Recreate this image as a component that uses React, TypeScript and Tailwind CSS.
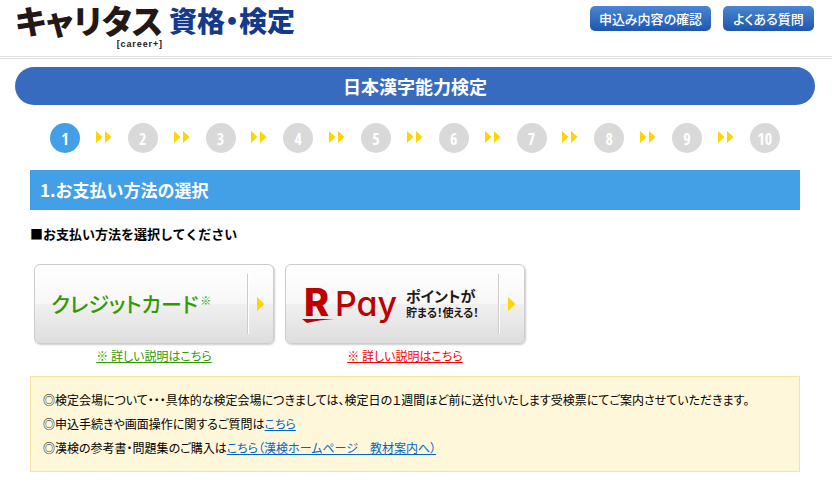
import React from 'react';

const STEPS = [1, 2, 3, 4, 5, 6, 7, 8, 9, 10];
const CURRENT_STEP = 1;

function StepArrows() {
  return (
    <svg width="16" height="12" viewBox="0 0 16 12" className="mb-0.5 shrink-0" aria-hidden="true">
      <path d="M0 0L6.5 6L0 12ZM9 0L15.5 6L9 12Z" fill="#ffd500" />
    </svg>
  );
}

function StepBar() {
  return (
    <ol className="mt-[18px] mr-[52px] ml-[50px] flex items-center justify-between">
      {STEPS.map((step) => (
        <React.Fragment key={step}>
          {step > 1 && (
            <li aria-hidden="true">
              <StepArrows />
            </li>
          )}
          <li
            className={`flex size-[30px] shrink-0 items-center justify-center rounded-full pt-0.5 font-['Liberation_Sans_Narrow','Open_Sans_Condensed','Roboto_Condensed','DejaVu_Sans_Condensed',sans-serif] text-base leading-4 font-bold text-white ${
              step === CURRENT_STEP ? 'bg-[#43a0e7]' : 'bg-[#d9d9d9]'
            }`}
          >
            {step}
          </li>
        </React.Fragment>
      ))}
    </ol>
  );
}

interface PaymentOptionProps {
  label: string;
  linkClass: string;
  children: React.ReactNode;
}

function PaymentOption({ label, linkClass, children }: PaymentOptionProps) {
  return (
    <div className="flex flex-col items-center">
      <button
        type="button"
        aria-label={label}
        className="flex h-20 w-60 items-center rounded-md border border-[#ccc] bg-[linear-gradient(#fff,#f7f7f7_50%,#f0f0f0_50%,#dedede)] shadow-[1px_1px_2px_#ccc]"
      >
        <span className="flex flex-1 items-center pl-4">{children}</span>
        <span className="h-[60px] w-0.5 border-r border-l border-r-white border-l-[#ccc]" />
        <svg width="8" height="14" viewBox="0 0 8 14" className="mx-2" aria-hidden="true">
          <path d="M0 0L7.5 7L0 14Z" fill="#ffd500" />
        </svg>
      </button>
      <a href="#" className={`mt-1 text-xs underline ${linkClass}`}>
        ※ 詳しい説明はこちら
      </a>
    </div>
  );
}

// "R" with the brush stroke under it, followed by "Pay"
function RPayLogo() {
  return (
    <svg width="98" height="60" viewBox="0 0 98 60" aria-hidden="true" fill="#bf0000">
      <text x="2" y="42" fontSize="38" fontWeight="800" fontFamily="Inter, sans-serif">R</text>
      <path d="M0 45H32Q16 46 5 49Z" />
      <text x="33" y="42" fontSize="34" fontWeight="500" fontFamily="Inter, sans-serif" className="[font-feature-settings:'cv11']">
        Pay
      </text>
    </svg>
  );
}

export default function App() {
  return (
    <div className="bg-white pb-2.5 font-['Noto_Sans_CJK_JP',sans-serif] text-black [font-feature-settings:'palt']">
      <header className="flex h-[59px] items-start justify-between border-b-3 border-double border-[#ddd] pr-[18px] pl-[15px]">
        <h1 className="flex items-start gap-1.5 leading-10">
          <span className="flex flex-col items-end text-[33px] font-black text-[#231815]">
            キャリタス
            <span className="font-['Liberation_Sans',sans-serif] text-[9px] leading-2 font-bold tracking-widest">
              [career+]
            </span>
          </span>
          <span className="text-[28px] font-black text-[#163a8a]">資格・検定</span>
        </h1>
        <nav className="flex gap-3 pt-1.5 text-[13px] leading-[25px] font-medium text-white">
          <a href="#" className="w-[121px] rounded-[5px] bg-linear-to-b from-[#4a86d2] to-[#1d57ae] text-center">
            申込み内容の確認
          </a>
          <a href="#" className="w-[91px] rounded-[5px] bg-linear-to-b from-[#4a86d2] to-[#1d57ae] text-center">
            よくある質問
          </a>
        </nav>
      </header>

      <h2 className="mt-2 mr-[17px] ml-[15px] rounded-full bg-[#376bbf] text-center text-lg leading-[38px] font-bold text-white [font-feature-settings:normal]">
        日本漢字能力検定
      </h2>

      <StepBar />

      <main className="mt-[17px] mr-8 ml-[30px]">
        <h3 className="bg-[#43a0e7] pl-2.5 text-[17px] leading-10 font-bold text-white [font-feature-settings:normal]">
          1.お支払い方法の選択
        </h3>
        <p className="mt-3 text-[13px] leading-6 font-bold [font-feature-settings:normal]">
          ■お支払い方法を選択してください
        </p>

        <div className="mt-[18px] ml-1 flex gap-[11px]">
          <PaymentOption label="クレジットカード" linkClass="text-[#339900]">
            <span className="text-[21px] font-medium text-[#339900]">クレジットカード</span>
            <span className="mb-2 ml-0.5 text-[11px] text-[#339900]">※</span>
          </PaymentOption>
          <PaymentOption label="R Pay" linkClass="text-[#ff0000]">
            <RPayLogo />
            <span className="ml-1.5 text-left font-bold whitespace-nowrap text-[#231815]">
              <span className="block text-[15px] leading-4">ポイントが</span>
              <span className="block text-[11px] leading-4">貯まる！使える！</span>
            </span>
          </PaymentOption>
        </div>

        <div className="mt-3 border border-[#f0e6a0] bg-[#fff7d9] px-3 py-[11px] text-xs leading-6">
          <p>
            ◎検定会場について・・・具体的な検定会場につきましては、検定日の１週間ほど前に送付いたします受検票にてご案内させていただきます。
          </p>
          <p>
            ◎申込手続きや画面操作に関するご質問は
            <a href="#" className="text-[#0066cc] underline">こちら</a>
          </p>
          <p>
            ◎漢検の参考書・問題集のご購入は
            <a href="#" className="text-[#0066cc] underline">こちら（漢検ホームページ　教材案内へ）</a>
          </p>
        </div>
      </main>
    </div>
  );
}
